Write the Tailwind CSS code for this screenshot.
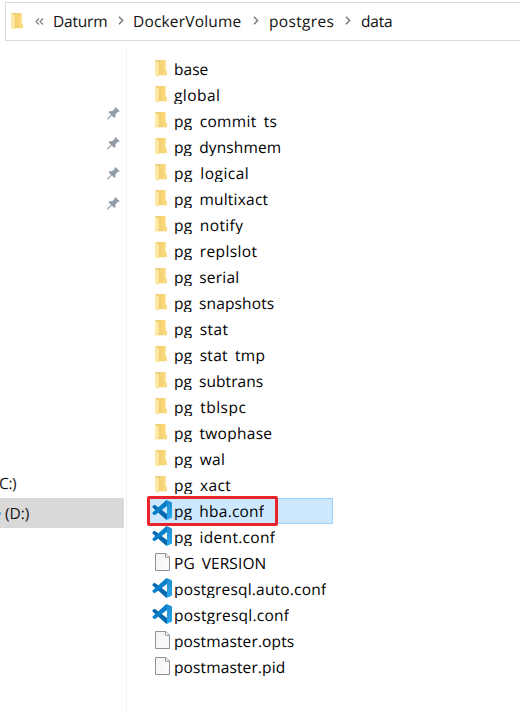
<!DOCTYPE html>
<html lang="en">
<head>
<meta charset="utf-8">
<title>data</title>
<script src="https://cdn.jsdelivr.net/npm/@tailwindcss/browser@4"></script>
</head>
<body class="bg-white w-[520px] h-[716px] overflow-hidden font-['Open_Sans','Noto_Sans',sans-serif] text-[15.5px] text-[#111] [text-rendering:geometricPrecision]">
<svg class="absolute w-0 h-0">
  <defs>
    <linearGradient id="gold" x1="0" x2="1"><stop offset="0" stop-color="#eccb67"/><stop offset="1" stop-color="#fbdc80"/></linearGradient>
    <linearGradient id="page" x1="0" y1="0" x2="1" y2="1"><stop offset="0" stop-color="#f3f4f5"/><stop offset="1" stop-color="#fcfcfd"/></linearGradient>
    <linearGradient id="blue" x1="0" y1="0" x2="0" y2="1"><stop offset="0" stop-color="#218bcb"/><stop offset="1" stop-color="#29aaf3"/></linearGradient>
    <symbol id="folder" viewBox="0 0 12 17">
      <path d="M1 0H10.7V10.5L12 11V15.2H3V16.7L0 15V.6Z" fill="url(#gold)"/>
      <path d="M0 .4L3.8 2.5V13.7L3 14V16.8L0 15.2Z" fill="#ffe9a9"/>
    </symbol>
    <symbol id="file" viewBox="0 0 15 18">
      <path d="M.5.5H11L14.5 4V17.5H.5Z" fill="url(#page)" stroke="#929292"/>
      <path d="M10.5.8V4.2H14.2" fill="#fff" stroke="#929292"/>
    </symbol>
    <symbol id="code" viewBox="0 0 100 100">
      <path d="M3 31L10 25Q13 23 17 26L75 70V98Q72 99 68 96L3 38Q0 35 3 31Z" fill="#0868ad"/>
      <path d="M3 69L10 75Q13 77 17 74L75 30V2Q72 1 68 4L3 62Q0 65 3 69Z" fill="#087fca"/>
      <path d="M70 99Q75 101 79 98L96 90Q100 88 100 84V16Q100 12 96 10L79 2Q74 -1 70 1L75 5V95Z" fill="url(#blue)"/>
    </symbol>
    <symbol id="pin" viewBox="0 0 13 13">
      <path d="M8.4 0L12.7 4.2L11.7 5L10.9 4.8L8.4 7.4L8.6 9.8L7.3 11L4.8 8.5L1.2 12.2L0 12.5L.4 11.2L4 7.7L1.5 5.3L2.7 4.1L5.2 4.2L7.8 1.8L7.5 1Z" fill="#929da8"/>
    </symbol>
  </defs>
</svg>

<header class="mt-[2px] ml-[5px] h-[39px] w-[530px] border border-[#d9d9d9] flex items-center">
  <svg class="ml-[5px] -mt-px w-3 h-[17px] shrink-0"><use href="#folder"/></svg>
  <svg class="ml-[12px] w-[9px] h-[7px] shrink-0" viewBox="0 0 9 7" fill="none" stroke="#777" stroke-width="1.1"><path d="M4 .5L1 3.5L4 6.5M8 .5L5 3.5L8 6.5"/></svg>
  <span class="w-[65px] ml-[9px] shrink-0"><span data-w="54">Daturm</span></span>
  <svg class="w-[6px] h-[9px] shrink-0 -mt-0.5" viewBox="0 0 6 9" fill="none" stroke="#7a7a7a" stroke-width="1.5"><path d="M1 .7L4.6 4.5L1 8.3"/></svg>
  <span class="w-[120px] ml-[9px] shrink-0"><span data-w="108">DockerVolume</span></span>
  <svg class="w-[6px] h-[9px] shrink-0 -mt-0.5" viewBox="0 0 6 9" fill="none" stroke="#7a7a7a" stroke-width="1.5"><path d="M1 .7L4.6 4.5L1 8.3"/></svg>
  <span class="w-[76px] ml-[10px] shrink-0"><span data-w="65">postgres</span></span>
  <svg class="w-[6px] h-[9px] shrink-0 -mt-0.5" viewBox="0 0 6 9" fill="none" stroke="#7a7a7a" stroke-width="1.5"><path d="M1 .7L4.6 4.5L1 8.3"/></svg>
  <span class="ml-[10px]"><span data-w="31">data</span></span>
</header>

<main class="flex mt-[7px] h-[666px]">
  <aside class="w-[127px] shrink-0 border-r border-[#f0f0f0] flex flex-col">
    <div class="mt-[58px] ml-[107px] h-[120px] flex flex-col">
      <div class="h-[30px] pt-px"><svg class="w-[13px] h-[13px]"><use href="#pin"/></svg></div>
      <div class="h-[30px] pt-px"><svg class="w-[13px] h-[13px]"><use href="#pin"/></svg></div>
      <div class="h-[30px] pt-px"><svg class="w-[13px] h-[13px]"><use href="#pin"/></svg></div>
      <div class="h-[30px] pt-px"><svg class="w-[13px] h-[13px]"><use href="#pin"/></svg></div>
    </div>
    <div class="mt-[242px] h-[30px] leading-[30px] -ml-px"><span data-w="17">C:)</span></div>
    <div class="w-[124px] h-[30px] leading-[30px] bg-[#d9d9d9] flex items-center">
      <i class="w-px h-[3px] bg-[#69aee0]"></i><span class="ml-[4px]"><span data-w="24">(D:)</span></span>
    </div>
  </aside>
  <section class="pt-2 pl-[22px]">
    <ul id="files" class="w-[184px]"></ul>
  </section>
</main>

<div class="absolute left-[147px] top-[496px] w-[131px] h-[30px] border-[3px] border-[#e9242b] rounded-[2px]"></div>

<script>
const files = [
  ['folder','base',34],['folder','global',46],['folder','pg_commit_ts',103],['folder','pg_dynshmem',107],
  ['folder','pg_logical',75],['folder','pg_multixact',94],['folder','pg_notify',69],['folder','pg_replslot',83],
  ['folder','pg_serial',65],['folder','pg_snapshots',100],['folder','pg_stat',54],['folder','pg_stat_tmp',91],
  ['folder','pg_subtrans',89],['folder','pg_tblspc',72],['folder','pg_twophase',98],['folder','pg_wal',51],
  ['folder','pg_xact',57],['code','pg_hba.conf',90],['code','pg_ident.conf',101],['file','PG_VERSION',92],
  ['code','postgresql.auto.conf',152],['code','postgresql.conf',115],['file','postmaster.opts',120],['file','postmaster.pid',111]
];
const icons = {
  folder: '<svg class="ml-[6px] mt-1 w-3 h-[17px]"><use href="#folder"/></svg>',
  code: '<svg class="ml-[3px] mt-[2px] w-5 h-5"><use href="#code"/></svg>',
  file: '<svg class="ml-[6px] mt-[3px] w-[15px] h-[18px]"><use href="#file"/></svg>'
};
document.getElementById('files').innerHTML = files.map(([kind, name, width]) => {
  const row = name === 'pg_hba.conf'
    ? 'flex h-[26px] bg-[#cce8ff] border-r border-b border-t border-[#99d1ff]'
    : 'flex h-[26px] border-t border-transparent';
  const label = name.replaceAll('_', '<span class="text-transparent">_</span>');
  return `<li class="${row}"><div class="w-[25px] shrink-0 -mt-px">${icons[kind]}</div><div class="h-[22px] -mt-px leading-[27px] overflow-hidden whitespace-nowrap"><span class="text-black" data-w="${width}">${label}</span></div></li>`;
}).join('');
function fit() {
  document.querySelectorAll('[data-w]').forEach(el => {
    const n = el.textContent.length;
    let spacing = 0;
    el.style.letterSpacing = '0px';
    for (let i = 0; i < 4; i++) {
      spacing += (+el.dataset.w + 0.3 - el.getBoundingClientRect().width) / n;
      el.style.letterSpacing = spacing + 'px';
    }
  });
}
fit();
document.fonts.ready.then(fit);
window.addEventListener('load', fit);
</script>
</body>
</html>
